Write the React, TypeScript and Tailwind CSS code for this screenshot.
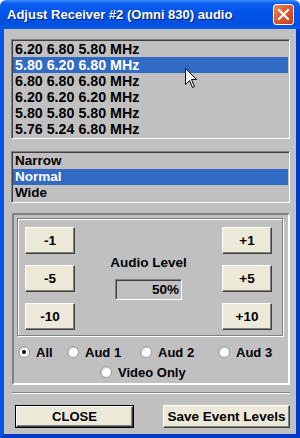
import React from "react";

const list1 = [
  "6.20 6.80 5.80 MHz",
  "5.80 6.20 6.80 MHz",
  "6.80 6.80 6.80 MHz",
  "6.20 6.20 6.20 MHz",
  "5.80 5.80 5.80 MHz",
  "5.76 5.24 6.80 MHz",
];
const list2 = ["Narrow", "Normal", "Wide"];

function Btn({ label }: { label: string }) {
  return (
    <div className="flex items-center justify-center w-[50px] h-[27px] bg-[#ece9d8] border border-t-white border-l-white border-r-[#404040] border-b-[#404040] shadow-[inset_-1px_-1px_0_#808080] text-[13.5px] font-bold text-black leading-none">
      {label}
    </div>
  );
}

function Radio({ label, checked, w }: { label: string; checked?: boolean; w?: string }) {
  return (
    <div className={`flex items-center gap-[6px] h-[16px] ${w ?? ""}`}>
      <div className="relative w-[12px] h-[12px] rounded-full bg-white border border-[#9a9a9a] shadow-[inset_1px_1px_1px_#c8c8c8] flex items-center justify-center">
        {checked && <div className="w-[4px] h-[4px] rounded-full bg-black" />}
      </div>
      <span className="text-[13px] font-bold text-black leading-none">{label}</span>
    </div>
  );
}

export default function App() {
  return (
    <div className="relative w-[300px] h-[438px] flex flex-col font-['Liberation_Sans',Arial,sans-serif] select-none">
      {/* Title bar */}
      <div className="h-[29px] flex items-center justify-between pl-[7px] pr-[6px] rounded-t-[6px] bg-[linear-gradient(180deg,#3a8cff_0%,#0a5ff0_12%,#0054e8_45%,#0050e2_80%,#0a5ae8_100%)]">
        <span className="text-white font-bold text-[13px] leading-none [text-shadow:1px_1px_0_#0a1f7a]">
          Adjust Receiver #2 (Omni 830) audio
        </span>
        <div className="w-[21px] h-[21px] rounded-[3px] border border-white bg-[linear-gradient(135deg,#ee8a66_0%,#dc5a30_45%,#c63e12_100%)] flex items-center justify-center">
          <svg width="13" height="13" viewBox="0 0 13 13">
            <path d="M2 2 L11 11 M11 2 L2 11" stroke="white" strokeWidth="2.2" strokeLinecap="square" />
          </svg>
        </div>
      </div>

      {/* Body */}
      <div className="flex-1 flex flex-col bg-[#c0c0c0] border-l-[4px] border-r-[4px] border-b-[4px] border-l-[#0b52e6] border-r-[#0538cc] border-b-[#0538cc] pt-[10px] pb-[6px]">
        {/* List 1 */}
        <div className="ml-[7px] w-[279px] h-[100px] border border-t-[#808080] border-l-[#808080] border-r-white border-b-white shadow-[inset_1px_1px_0_#404040] p-[1px]">
          {list1.map((t, i) => (
            <div
              key={t}
              className={`h-[16px] pl-[2px] flex items-center text-[14.25px] font-bold leading-none ${
                i === 1 ? "bg-[#316ac5] text-white" : "text-black"
              }`}
            >
              {t}
            </div>
          ))}
        </div>

        {/* List 2 */}
        <div className="mt-[12px] ml-[7px] w-[279px] h-[52px] border border-t-[#808080] border-l-[#808080] border-r-white border-b-white shadow-[inset_1px_1px_0_#404040] p-[1px]">
          {list2.map((t, i) => (
            <div
              key={t}
              className={`h-[16px] pl-[2px] flex items-center text-[13.5px] font-bold leading-none ${
                i === 1 ? "bg-[#316ac5] text-white" : "text-black"
              }`}
            >
              {t}
            </div>
          ))}
        </div>

        {/* Group */}
        <div className="mt-[10px] ml-[8px] w-[278px] h-[172px] border-2 border-t-[#808080] border-l-[#808080] border-r-white border-b-white flex flex-col">
          <div className="mt-[3px] ml-[3px] mr-[5px] h-[118px] border border-[#808080] shadow-[inset_1px_1px_0_#fff,1px_1px_0_#fff] flex pt-[8px] pl-[7px] pr-[10px]">
            <div className="flex flex-col gap-[11px]">
              <Btn label="-1" />
              <Btn label="-5" />
              <Btn label="-10" />
            </div>
            <div className="flex-1 flex flex-col items-center">
              <div className="mt-[28px] h-[16px] flex items-center text-[13.5px] font-bold text-black leading-none">
                Audio Level
              </div>
              <div className="mt-[8px] w-[67px] h-[21px] border border-t-[#808080] border-l-[#808080] border-r-white border-b-white shadow-[inset_1px_1px_0_#404040] flex items-center justify-end pr-[2px] text-[13.5px] font-bold text-black leading-none">
                50%
              </div>
            </div>
            <div className="flex flex-col gap-[11px]">
              <Btn label="+1" />
              <Btn label="+5" />
              <Btn label="+10" />
            </div>
          </div>
          <div className="mt-[8px] pl-[4px] flex">
            <Radio label="All" checked w="w-[49px]" />
            <Radio label="Aud 1" w="w-[73px]" />
            <Radio label="Aud 2" w="w-[78px]" />
            <Radio label="Aud 3" />
          </div>
          <div className="mt-[4px] pl-[86px] flex">
            <Radio label="Video Only" />
          </div>
        </div>

        {/* Separator */}
        <div className="mt-[7px] ml-[8px] w-[278px] h-[2px] border-t border-t-[#808080] border-b border-b-white" />

        {/* Bottom buttons */}
        <div className="mt-[11px] flex">
          <div className="ml-[11px] w-[119px] h-[23px] border border-black">
            <div className="w-full h-full bg-[#ece9d8] border border-t-white border-l-white border-r-[#404040] border-b-[#404040] shadow-[inset_-1px_-1px_0_#808080] flex items-center justify-center text-[13px] font-bold text-black leading-none">
              CLOSE
            </div>
          </div>
          <div className="ml-[29px] w-[127px] h-[23px] bg-[#ece9d8] border border-t-white border-l-white border-r-[#404040] border-b-[#404040] shadow-[inset_-1px_-1px_0_#808080] flex items-center justify-center text-[13.5px] font-bold text-black leading-none whitespace-nowrap">
            Save Event Levels
          </div>
        </div>
      </div>

      {/* Mouse cursor */}
      <svg className="absolute left-[185px] top-[68px]" width="13" height="22" viewBox="0 0 13 22">
        <path
          d="M0.5 0.5 L0.5 16.5 L4.5 12.5 L7.5 19.5 L9.5 18.5 L6.5 11.5 L11.5 11.5 Z"
          fill="white"
          stroke="black"
          strokeWidth="1"
        />
      </svg>
    </div>
  );
}
